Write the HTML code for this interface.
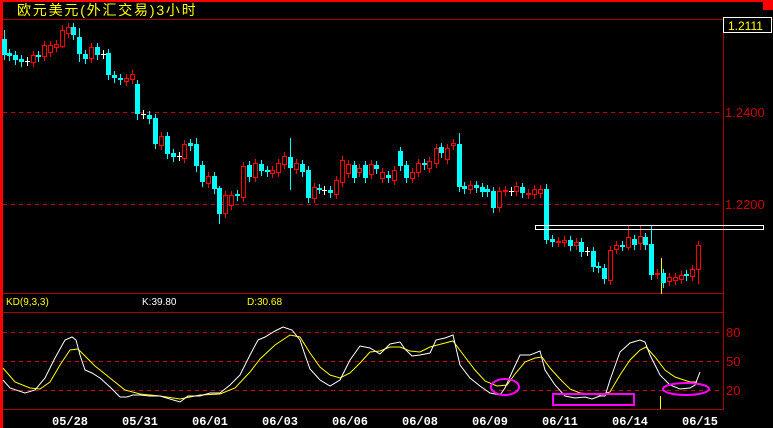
<!DOCTYPE html>
<html><head><meta charset="utf-8"><style>
html,body{margin:0;padding:0;background:#000;width:773px;height:428px;overflow:hidden}
svg{display:block}
.t{font-family:"Liberation Sans","Noto Sans CJK SC",sans-serif}
.m{font-family:"Liberation Mono",monospace}
</style></head><body>
<svg id="s" width="773" height="428" xmlns="http://www.w3.org/2000/svg" shape-rendering="crispEdges">
<rect width="773" height="428" fill="#000"/>
<rect x="0" y="0" width="773" height="2" fill="#f00"/>
<rect x="0" y="0" width="3" height="428" fill="#f00"/>
<rect x="763" y="0" width="10" height="10" fill="#f00"/>
<text class="t" x="17" y="15" fill="#ff0" font-size="14" letter-spacing="1.8">欧元美元(外汇交易)3小时</text>
<line x1="3" y1="19.5" x2="773" y2="19.5" stroke="#a00"/>
<line x1="723.5" y1="19" x2="723.5" y2="410" stroke="#a00"/>
<rect x="723.5" y="17.5" width="48" height="15" fill="#000" stroke="#fff"/>
<text class="t" x="728" y="30" fill="#ff0" font-size="12">1.2111</text>
<g stroke="#c00" stroke-dasharray="4,4">
<line x1="3" y1="112.5" x2="723" y2="112.5"/>
<line x1="3" y1="204.5" x2="723" y2="204.5"/>
<line x1="3" y1="332.5" x2="723" y2="332.5"/>
<line x1="3" y1="361.5" x2="723" y2="361.5"/>
<line x1="3" y1="390.5" x2="723" y2="390.5"/>
</g>
<g class="t" fill="#c00" font-size="13">
<text x="725" y="117">1.2400</text>
<text x="725" y="209">1.2200</text>
<text x="726" y="337">80</text>
<text x="726" y="366">50</text>
<text x="726" y="395">20</text>
</g>
<line x1="3" y1="293.5" x2="723" y2="293.5" stroke="#a00"/>
<line x1="3" y1="312.5" x2="723" y2="312.5" stroke="#a00"/>
<line x1="3" y1="409.5" x2="723" y2="409.5" stroke="#a00"/>
<text class="t" x="6" y="305" fill="#ff0" font-size="10">KD(9,3,3)</text>
<text class="t" x="142" y="305" fill="#fff" font-size="10">K:39.80</text>
<text class="t" x="247" y="305" fill="#ff0" font-size="10">D:30.68</text>
<g class="m" fill="#fff" font-size="12" font-weight="bold">
<text x="52" y="425">05/28</text><text x="122" y="425">05/31</text><text x="192" y="425">06/01</text>
<text x="262" y="425">06/03</text><text x="332" y="425">06/06</text><text x="402" y="425">06/08</text>
<text x="472" y="425">06/09</text><text x="542" y="425">06/11</text><text x="612" y="425">06/14</text>
<text x="682" y="425">06/15</text>
</g>
<line x1="661.5" y1="258" x2="661.5" y2="294" stroke="#ff0"/>
<line x1="660.5" y1="396" x2="660.5" y2="409" stroke="#ff0"/>
<g id="c"></g>
<rect x="535.5" y="225.5" width="228" height="4" fill="none" stroke="#fff"/>
<g id="k" fill="none" stroke-width="1" shape-rendering="auto"></g>
<g fill="none" stroke="#f0f" stroke-width="2" shape-rendering="auto">
<ellipse cx="505" cy="387" rx="14" ry="8"/>
<rect x="553" y="394" width="81" height="11"/>
<ellipse cx="686" cy="389" rx="23" ry="6"/>
</g>
</svg>
<script>
var C=[[4,39,55,'c',30,60],[9,53,56,'c'],[15,55,60,'c'],[21,59,62,'c'],[27,61,61,'w'],[33,55,62,'r'],[38,55,57,'c'],[44,45,56,'r'],[50,45,52,'r'],[56,44,47,'r'],[62,30,46,'r',25,48],[68,27,33,'r'],[73,27,35,'c'],[79,37,54,'c',28,62],[85,54,59,'c'],[91,47,58,'r'],[97,47,55,'c'],[103,54,54,'w'],[108,53,75,'c'],[114,75,78,'c'],[120,78,80,'c'],[126,78,81,'r'],[132,74,79,'r'],[137,84,114,'c',80,120],[143,114,114,'w'],[149,115,119,'c'],[155,118,144,'c'],[161,136,145,'r'],[167,136,154,'c'],[173,153,157,'c'],[179,156,156,'w'],[184,144,158,'r'],[190,143,146,'c'],[196,144,166,'c',138,172],[202,165,182,'c'],[208,176,183,'r'],[214,176,189,'c'],[219,188,214,'c',186,224],[225,195,213,'r'],[231,195,205,'r'],[237,194,196,'c'],[243,166,197,'r'],[249,165,177,'c'],[255,163,177,'r'],[261,164,171,'c'],[267,170,172,'c'],[272,170,173,'r'],[278,163,172,'r'],[284,156,164,'r'],[290,157,168,'c',138,190],[296,163,169,'r'],[302,164,172,'c'],[308,170,198,'c'],[314,187,198,'r'],[319,188,189,'c'],[324,190,190,'w'],[330,190,193,'c'],[336,180,194,'r'],[342,160,182,'r'],[348,164,173,'r'],[354,165,178,'c'],[359,168,172,'r'],[365,165,178,'c'],[371,164,174,'r'],[376,165,169,'c'],[382,172,178,'r'],[388,175,178,'c'],[394,170,180,'r'],[400,151,166,'c'],[406,165,178,'c'],[412,172,178,'r'],[418,163,172,'r'],[424,163,165,'c'],[429,161,168,'r'],[436,148,163,'r'],[441,147,153,'c'],[447,148,159,'r'],[453,143,145,'r'],[459,144,187,'c',133,192],[464,186,189,'c'],[470,185,189,'r'],[476,185,188,'c'],[482,187,192,'c'],[487,189,192,'c'],[493,191,208,'c'],[499,191,207,'r'],[505,190,191,'r'],[511,191,191,'w'],[516,186,191,'r'],[522,187,193,'c'],[528,193,194,'r'],[534,189,194,'r'],[540,189,193,'r'],[546,189,240,'c',184,244],[552,239,242,'c'],[558,241,242,'r'],[564,240,242,'r'],[570,240,246,'c'],[576,242,245,'r'],[581,242,252,'c'],[587,251,251,'w'],[593,251,267,'c'],[598,266,268,'c'],[604,268,279,'c'],[610,250,280,'r'],[616,245,249,'r'],[622,245,246,'c'],[628,237,247,'r',225,250],[634,239,245,'c'],[640,236,243,'r',225,250],[645,237,245,'c'],[651,244,275,'c',226,280],[657,273,274,'r'],[663,273,283,'c'],[669,277,281,'r'],[675,277,280,'r'],[681,275,279,'r'],[686,274,276,'c'],[692,269,276,'r'],[698,245,269,'r',241,284]];
var g=document.getElementById('c'),h='';
C.forEach(function(a){var x=a[0],t=a[1],b=a[2],ty=a[3],hi=a[4]||t-4,lo=a[5]||b+5;
var col=ty=='c'?'#0ff':ty=='r'?'#f00':'#fff';
h+='<line x1="'+(x+.5)+'" y1="'+hi+'" x2="'+(x+.5)+'" y2="'+lo+'" stroke="'+col+'"/>';
if(ty=='w'){h+='<line x1="'+(x-2)+'" y1="'+(t+.5)+'" x2="'+(x+3)+'" y2="'+(t+.5)+'" stroke="#fff"/>';}
else if(ty=='c'){h+='<rect x="'+(x-2)+'" y="'+t+'" width="5" height="'+Math.max(2,b-t)+'" fill="#0ff"/>';}
else{h+='<rect x="'+(x-1.5)+'" y="'+(t+.5)+'" width="4" height="'+Math.max(1,b-t)+'" fill="#000" stroke="#f00"/>';}
});
g.innerHTML=h;
var K=[[3,380],[10,388],[25,393],[35,390],[45,378],[55,358],[65,340],[72,337],[76,340],[80,355],[85,370],[92,373],[100,378],[110,387],[120,397],[127,397],[133,395],[140,395],[150,396],[160,396],[170,399],[180,402],[188,396],[200,396],[210,393],[220,393],[230,385],[240,375],[250,355],[258,340],[265,337],[275,331],[283,327],[292,330],[300,340],[305,355],[310,369],[320,380],[330,386],[340,380],[350,360],[360,346],[370,348],[380,354],[390,344],[400,342],[405,349],[412,356],[420,355],[430,353],[436,340],[445,338],[453,335],[460,365],[470,378],[480,386],[490,393],[500,395],[505,388],[513,370],[520,355],[530,355],[540,351],[545,370],[555,385],[565,396],[575,398],[585,397],[592,399],[600,396],[605,396],[610,380],[620,352],[630,343],[640,340],[645,342],[650,355],[660,375],[670,385],[680,389],[690,388],[695,385],[700,372]];
var D=[[3,368],[15,382],[30,388],[40,389],[50,382],[60,365],[70,350],[78,349],[85,356],[95,366],[110,378],[125,390],[140,394],[160,396],[180,399],[200,395],[220,394],[235,388],[250,372],[260,359],[275,345],[290,335],[300,337],[310,353],[320,367],[330,375],[340,378],[350,373],[360,363],[370,352],[380,351],[390,347],[400,347],[410,351],[420,352],[430,347],[445,343],[453,341],[465,357],[475,370],[485,381],[497,386],[507,385],[515,374],[525,362],[535,358],[542,357],[550,368],[560,379],[570,389],[580,393],[600,395],[610,392],[620,375],[630,360],[640,350],[646,347],[655,357],[665,370],[675,377],[690,382],[697,382]];
function pl(p,c){return '<polyline points="'+p.map(function(q){return q.join(',')}).join(' ')+'" stroke="'+c+'"/>';}
document.getElementById('k').innerHTML=pl(D,'#ff0')+pl(K,'#fff');
</script>
</body></html>
